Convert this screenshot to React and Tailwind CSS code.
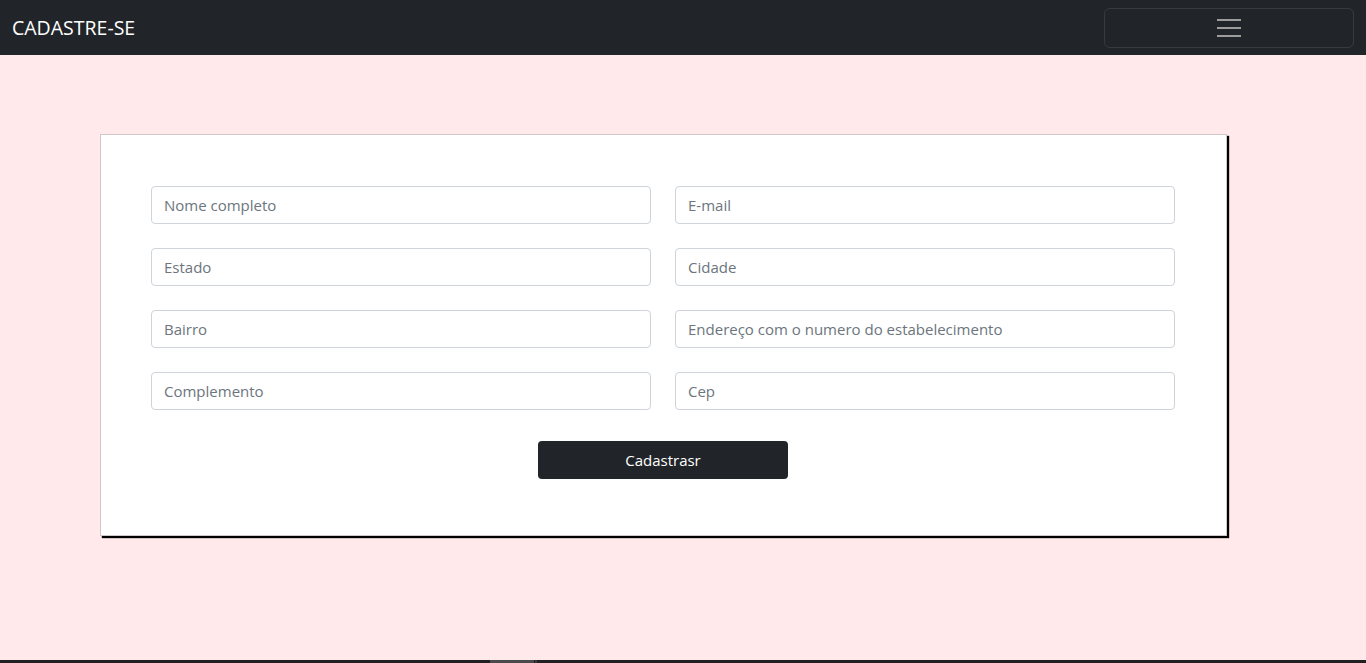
import React from 'react';

const fields = [
  ['Nome completo', 'E-mail'],
  ['Estado', 'Cidade'],
  ['Bairro', 'Endereço com o numero do estabelecimento'],
  ['Complemento', 'Cep'],
];

const Navbar = () => (
  <nav className="h-[55px] bg-[#212529] flex items-center justify-between pl-3 pr-3">
    <span className="text-white text-[19.5px] leading-none">CADASTRE-SE</span>
    <button className="w-[250px] h-[40px] border border-white/10 rounded-[6px] flex flex-col items-center justify-center gap-[6px]">
      <span className="block w-6 h-[2px] bg-[#9c9c9c]" />
      <span className="block w-6 h-[2px] bg-[#9c9c9c]" />
      <span className="block w-6 h-[2px] bg-[#9c9c9c]" />
    </button>
  </nav>
);

const App = () => {
  return (
    <div className="h-[663px] flex flex-col bg-[#ffe9ea] font-['Open_Sans','Noto_Sans',sans-serif] overflow-hidden">
      <Navbar />

      <main className="flex-1 pt-[79px] pl-[100px]">
        <div className="w-[1127px] h-[402px] bg-white border border-[#cfc7c8] shadow-[2px_2px_1px_#000] px-[50px] pt-[51px]">
          <form className="flex flex-col gap-6">
            {fields.map((row) => (
              <div key={row[0]} className="grid grid-cols-[500px_500px] gap-6">
                {row.map((ph) => (
                  <input
                    key={ph}
                    type="text"
                    placeholder={ph}
                    className="h-[38px] w-[500px] border border-[#ced4da] rounded-[4px] px-3 text-[15px] text-[#212529] placeholder:text-[#6c757d] bg-white outline-none"
                  />
                ))}
              </div>
            ))}
            <div className="flex pt-[7px] pl-[387px]">
              <button
                type="button"
                className="w-[250px] h-[38px] bg-[#212529] text-white text-[15px] rounded-[4px]"
              >
                Cadastrasr
              </button>
            </div>
          </form>
        </div>
      </main>

      <div className="h-[3px] bg-[#231f20] flex">
        <div className="ml-[490px] w-[44px] bg-[#4a4a4a]" />
        <div className="ml-[1px] w-[2px] bg-[#3a3a3a]" />
      </div>
    </div>
  );
};

export default App;
